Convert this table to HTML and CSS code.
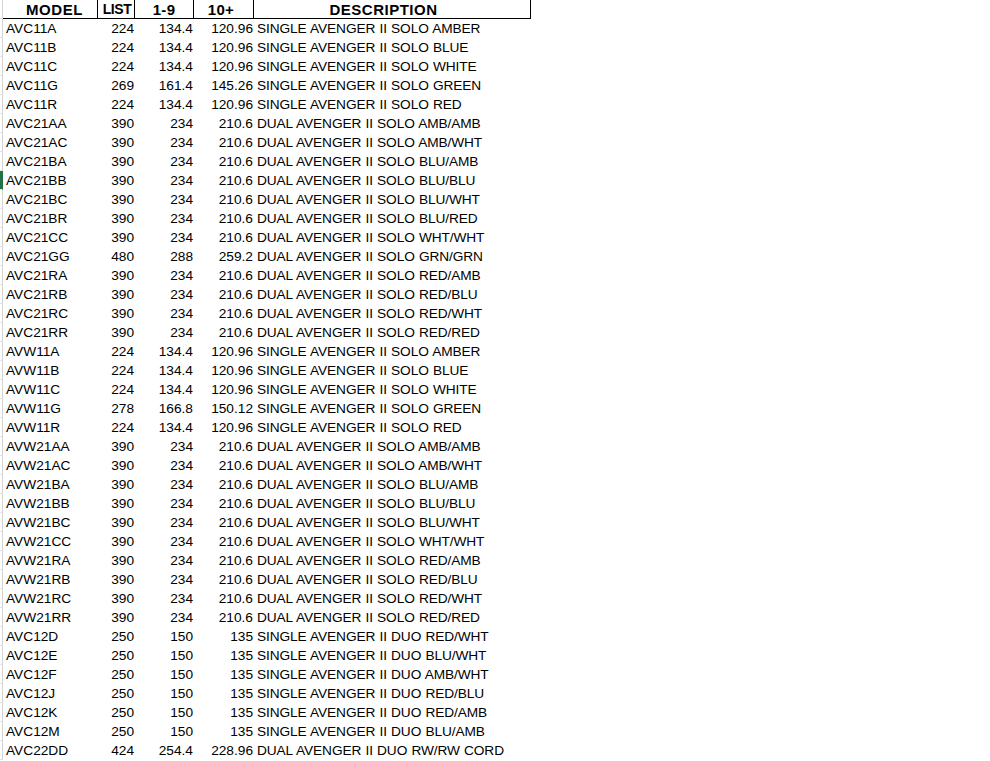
FILE: index.html
```html
<!DOCTYPE html>
<html lang="en">
<head>
    <meta charset="UTF-8">
    <title>Avenger II Price List</title>
    <link rel="stylesheet" href="styles.css">
</head>
<body>
    <table class="sheet">
        <colgroup>
            <col class="c-head">
            <col class="c-model">
            <col class="c-list">
            <col class="c-qty">
            <col class="c-ten">
            <col class="c-desc">
        </colgroup>
        <thead>
            <tr>
                <th class="rowhead"></th>
                <th class="h-model">MODEL</th>
                <th class="h-list">LIST</th>
                <th>1-9</th>
                <th class="h-ten">10+</th>
                <th class="h-desc">DESCRIPTION</th>
            </tr>
        </thead>
        <tbody>
            <tr><td class="rowhead"></td><td>AVC11A</td><td class="num">224</td><td class="num">134.4</td><td class="num">120.96</td><td class="desc">SINGLE AVENGER II SOLO AMBER</td></tr>
            <tr><td class="rowhead"></td><td>AVC11B</td><td class="num">224</td><td class="num">134.4</td><td class="num">120.96</td><td class="desc">SINGLE AVENGER II SOLO BLUE</td></tr>
            <tr><td class="rowhead"></td><td>AVC11C</td><td class="num">224</td><td class="num">134.4</td><td class="num">120.96</td><td class="desc">SINGLE AVENGER II SOLO WHITE</td></tr>
            <tr><td class="rowhead"></td><td>AVC11G</td><td class="num">269</td><td class="num">161.4</td><td class="num">145.26</td><td class="desc">SINGLE AVENGER II SOLO GREEN</td></tr>
            <tr><td class="rowhead"></td><td>AVC11R</td><td class="num">224</td><td class="num">134.4</td><td class="num">120.96</td><td class="desc">SINGLE AVENGER II SOLO RED</td></tr>
            <tr><td class="rowhead"></td><td>AVC21AA</td><td class="num">390</td><td class="num">234</td><td class="num">210.6</td><td class="desc">DUAL AVENGER II SOLO AMB/AMB</td></tr>
            <tr><td class="rowhead"></td><td>AVC21AC</td><td class="num">390</td><td class="num">234</td><td class="num">210.6</td><td class="desc">DUAL AVENGER II SOLO AMB/WHT</td></tr>
            <tr><td class="rowhead"></td><td>AVC21BA</td><td class="num">390</td><td class="num">234</td><td class="num">210.6</td><td class="desc">DUAL AVENGER II SOLO BLU/AMB</td></tr>
            <tr class="active"><td class="rowhead"></td><td>AVC21BB</td><td class="num">390</td><td class="num">234</td><td class="num">210.6</td><td class="desc">DUAL AVENGER II SOLO BLU/BLU</td></tr>
            <tr><td class="rowhead"></td><td>AVC21BC</td><td class="num">390</td><td class="num">234</td><td class="num">210.6</td><td class="desc">DUAL AVENGER II SOLO BLU/WHT</td></tr>
            <tr><td class="rowhead"></td><td>AVC21BR</td><td class="num">390</td><td class="num">234</td><td class="num">210.6</td><td class="desc">DUAL AVENGER II SOLO BLU/RED</td></tr>
            <tr><td class="rowhead"></td><td>AVC21CC</td><td class="num">390</td><td class="num">234</td><td class="num">210.6</td><td class="desc">DUAL AVENGER II SOLO WHT/WHT</td></tr>
            <tr><td class="rowhead"></td><td>AVC21GG</td><td class="num">480</td><td class="num">288</td><td class="num">259.2</td><td class="desc">DUAL AVENGER II SOLO GRN/GRN</td></tr>
            <tr><td class="rowhead"></td><td>AVC21RA</td><td class="num">390</td><td class="num">234</td><td class="num">210.6</td><td class="desc">DUAL AVENGER II SOLO RED/AMB</td></tr>
            <tr><td class="rowhead"></td><td>AVC21RB</td><td class="num">390</td><td class="num">234</td><td class="num">210.6</td><td class="desc">DUAL AVENGER II SOLO RED/BLU</td></tr>
            <tr><td class="rowhead"></td><td>AVC21RC</td><td class="num">390</td><td class="num">234</td><td class="num">210.6</td><td class="desc">DUAL AVENGER II SOLO RED/WHT</td></tr>
            <tr><td class="rowhead"></td><td>AVC21RR</td><td class="num">390</td><td class="num">234</td><td class="num">210.6</td><td class="desc">DUAL AVENGER II SOLO RED/RED</td></tr>
            <tr><td class="rowhead"></td><td>AVW11A</td><td class="num">224</td><td class="num">134.4</td><td class="num">120.96</td><td class="desc">SINGLE AVENGER II SOLO AMBER</td></tr>
            <tr><td class="rowhead"></td><td>AVW11B</td><td class="num">224</td><td class="num">134.4</td><td class="num">120.96</td><td class="desc">SINGLE AVENGER II SOLO BLUE</td></tr>
            <tr><td class="rowhead"></td><td>AVW11C</td><td class="num">224</td><td class="num">134.4</td><td class="num">120.96</td><td class="desc">SINGLE AVENGER II SOLO WHITE</td></tr>
            <tr><td class="rowhead"></td><td>AVW11G</td><td class="num">278</td><td class="num">166.8</td><td class="num">150.12</td><td class="desc">SINGLE AVENGER II SOLO GREEN</td></tr>
            <tr><td class="rowhead"></td><td>AVW11R</td><td class="num">224</td><td class="num">134.4</td><td class="num">120.96</td><td class="desc">SINGLE AVENGER II SOLO RED</td></tr>
            <tr><td class="rowhead"></td><td>AVW21AA</td><td class="num">390</td><td class="num">234</td><td class="num">210.6</td><td class="desc">DUAL AVENGER II SOLO AMB/AMB</td></tr>
            <tr><td class="rowhead"></td><td>AVW21AC</td><td class="num">390</td><td class="num">234</td><td class="num">210.6</td><td class="desc">DUAL AVENGER II SOLO AMB/WHT</td></tr>
            <tr><td class="rowhead"></td><td>AVW21BA</td><td class="num">390</td><td class="num">234</td><td class="num">210.6</td><td class="desc">DUAL AVENGER II SOLO BLU/AMB</td></tr>
            <tr><td class="rowhead"></td><td>AVW21BB</td><td class="num">390</td><td class="num">234</td><td class="num">210.6</td><td class="desc">DUAL AVENGER II SOLO BLU/BLU</td></tr>
            <tr><td class="rowhead"></td><td>AVW21BC</td><td class="num">390</td><td class="num">234</td><td class="num">210.6</td><td class="desc">DUAL AVENGER II SOLO BLU/WHT</td></tr>
            <tr><td class="rowhead"></td><td>AVW21CC</td><td class="num">390</td><td class="num">234</td><td class="num">210.6</td><td class="desc">DUAL AVENGER II SOLO WHT/WHT</td></tr>
            <tr><td class="rowhead"></td><td>AVW21RA</td><td class="num">390</td><td class="num">234</td><td class="num">210.6</td><td class="desc">DUAL AVENGER II SOLO RED/AMB</td></tr>
            <tr><td class="rowhead"></td><td>AVW21RB</td><td class="num">390</td><td class="num">234</td><td class="num">210.6</td><td class="desc">DUAL AVENGER II SOLO RED/BLU</td></tr>
            <tr><td class="rowhead"></td><td>AVW21RC</td><td class="num">390</td><td class="num">234</td><td class="num">210.6</td><td class="desc">DUAL AVENGER II SOLO RED/WHT</td></tr>
            <tr><td class="rowhead"></td><td>AVW21RR</td><td class="num">390</td><td class="num">234</td><td class="num">210.6</td><td class="desc">DUAL AVENGER II SOLO RED/RED</td></tr>
            <tr><td class="rowhead"></td><td>AVC12D</td><td class="num">250</td><td class="num">150</td><td class="num">135</td><td class="desc">SINGLE AVENGER II DUO RED/WHT</td></tr>
            <tr><td class="rowhead"></td><td>AVC12E</td><td class="num">250</td><td class="num">150</td><td class="num">135</td><td class="desc">SINGLE AVENGER II DUO BLU/WHT</td></tr>
            <tr><td class="rowhead"></td><td>AVC12F</td><td class="num">250</td><td class="num">150</td><td class="num">135</td><td class="desc">SINGLE AVENGER II DUO AMB/WHT</td></tr>
            <tr><td class="rowhead"></td><td>AVC12J</td><td class="num">250</td><td class="num">150</td><td class="num">135</td><td class="desc">SINGLE AVENGER II DUO RED/BLU</td></tr>
            <tr><td class="rowhead"></td><td>AVC12K</td><td class="num">250</td><td class="num">150</td><td class="num">135</td><td class="desc">SINGLE AVENGER II DUO RED/AMB</td></tr>
            <tr><td class="rowhead"></td><td>AVC12M</td><td class="num">250</td><td class="num">150</td><td class="num">135</td><td class="desc">SINGLE AVENGER II DUO BLU/AMB</td></tr>
            <tr><td class="rowhead"></td><td>AVC22DD</td><td class="num">424</td><td class="num">254.4</td><td class="num">228.96</td><td class="desc">DUAL AVENGER II DUO RW/RW CORD</td></tr>
        </tbody>
    </table>
</body>
</html>
```

FILE: styles.css
```css
body {
    margin: 0;
    padding: 0;
    background: #fff;
    font-family: "Liberation Sans", Arial, sans-serif;
    color: #000;
}
.sheet {
    border-collapse: separate;
    border-spacing: 0;
    table-layout: fixed;
    width: 531px;
    font-size: 13.7px;
}
.c-head { width: 3px; }
.c-model { width: 95px; }
.c-list { width: 37px; }
.c-qty { width: 59px; }
.c-ten { width: 60px; }
.c-desc { width: 277px; }
.sheet th, .sheet td {
    box-sizing: border-box;
    padding: 0 3px;
    white-space: nowrap;
    overflow: hidden;
}
.sheet th {
    height: 19px;
    font-size: 15px;
    font-weight: bold;
    letter-spacing: 0.3px;
    text-align: center;
    border-right: 1px solid #000;
    border-bottom: 1px solid #000;
    line-height: 17px;
    vertical-align: middle;
}
.sheet th.h-model { padding-left: 12px; letter-spacing: 0.6px; }
.sheet th.h-list { font-size: 14px; letter-spacing: -0.4px; padding: 0 0 0 2px; }
.sheet th.h-ten { padding-right: 8px; }
.sheet th.h-desc { padding-right: 20px; letter-spacing: 0.5px; }
.sheet td {
    height: 19px;
    line-height: 19px;
}
.sheet .rowhead {
    padding: 0;
    border-right: 1px solid #d4d4d4;
    border-bottom: 1px solid #e2e2e2;
}
.sheet th.rowhead {
    border-bottom: 1px solid #e2e2e2;
}
.sheet .active .rowhead {
    border-right-color: #217346;
    background: #217346;
}
.sheet .num {
    text-align: right;
    padding-right: 1px;
}
.sheet .desc {
    letter-spacing: -0.1px;
    word-spacing: 0.5px;
}
```
